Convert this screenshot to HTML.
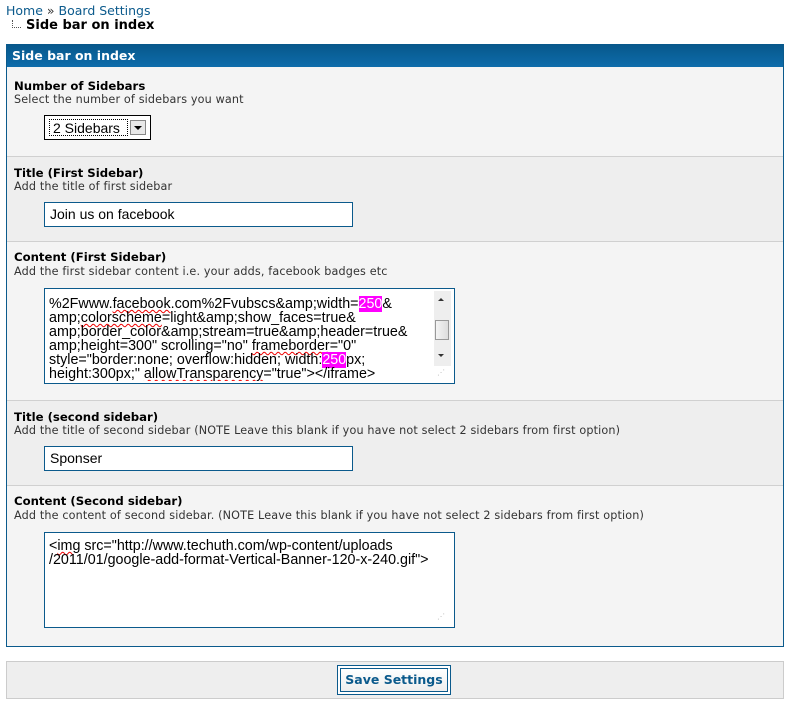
<!DOCTYPE html>
<html><head><meta charset="utf-8"><style>
*{margin:0;padding:0;box-sizing:border-box}
body{width:786px;height:701px;background:#fff;font-family:"DejaVu Sans",Verdana,sans-serif;position:relative;overflow:hidden}
.a{position:absolute}
.crumb{font-size:12.5px;color:#0b5a8c;left:6px;top:3px;white-space:nowrap}
.cur{font-size:13px;font-weight:bold;color:#000;left:26px;top:18px}
.panel{left:6px;top:44px;width:778px;height:603px;border:1px solid #0b5a8c;border-top:none;background:#f4f4f4}
.hd{left:0;top:0;width:776px;height:23px;background:linear-gradient(#07578a,#0e6cab);color:#fff;font-weight:bold;font-size:12.5px;padding:4px 0 0 5px}
.row{left:0;width:776px;border-bottom:1px solid #d0d0d0}
.lb{font-size:11.7px;font-weight:bold;color:#000;left:7px;white-space:nowrap}
.ds{font-size:11.2px;color:#333;left:7px;white-space:nowrap;letter-spacing:0.15px}
.inp{border:1px solid #0b5a8c;background:#fff;font-family:"Liberation Sans",Arial,sans-serif;font-size:14px;padding:3px 0 0 5px;color:#000}
.ta{font-family:"Liberation Sans",Arial,sans-serif;font-size:14.3px;line-height:14px;padding:2px 0 0 4px;color:#000;overflow:hidden;white-space:nowrap}
.hl{background:#ff00ff;color:#fff}
.sq{text-decoration:underline wavy #e00;text-decoration-thickness:1px}
</style></head><body>
<div class="a crumb">Home <span style="color:#333">»</span> Board Settings</div>
<div class="a" style="left:12px;top:20px;width:9px;height:8px;border-left:1px dotted #555;border-bottom:1px dotted #555"></div>
<div class="a cur">Side bar on index</div>

<div class="a panel">
<div class="a hd">Side bar on index</div>
<div class="a row" style="top:23px;height:90px;background:#f4f4f4">
 <div class="a lb" style="top:12px">Number of Sidebars</div>
 <div class="a ds" style="top:26px">Select the number of sidebars you want</div>
 <div class="a" style="left:37px;top:48px;width:107px;height:25px;border:1px solid #000;background:#fff">
  <div class="a" style="left:4px;top:3px;width:79px;height:17px;border:1px dotted #000;font-family:'Liberation Sans',Arial,sans-serif;font-size:14px;padding:0 0 0 3px">2 Sidebars</div>
  <div class="a" style="left:85px;top:4px;width:16px;height:15px;border:1px solid #888;background:#e8e8e8"><div class="a" style="left:3px;top:5px;border-left:4px solid transparent;border-right:4px solid transparent;border-top:4px solid #000"></div></div>
 </div>
</div>
<div class="a row" style="top:113px;height:85px;background:#eeeeee">
 <div class="a lb" style="top:9px">Title (First Sidebar)</div>
 <div class="a ds" style="top:23px">Add the title of first sidebar</div>
 <div class="a inp" style="left:37px;top:45px;width:309px;height:25px">Join us on facebook</div>
</div>
<div class="a row" style="top:198px;height:159px;background:#f4f4f4">
 <div class="a lb" style="top:8px">Content (First Sidebar)</div>
 <div class="a ds" style="top:23px">Add the first sidebar content i.e. your adds, facebook badges etc</div>
 <div class="a" style="left:37px;top:46px;width:411px;height:96px;border:1px solid #0b5a8c;background:#fff;overflow:hidden">
  <div class="a ta" style="left:0;top:-8px;width:385px">
  <span style="color:#fff">x</span><br>
  %2Fwww.<span class="sq">facebook</span>.com%2Fvubscs&amp;amp;width=<span class="hl">250</span>&amp;<br>
  amp;<span class="sq">colorscheme</span>=light&amp;amp;show_faces=true&amp;<br>
  amp;border_color&amp;amp;stream=true&amp;amp;header=true&amp;<br>
  amp;height=300" scrolling="no" <span class="sq">frameborder</span>="0"<br>
  style="border:none; overflow:hidden; width:<span class="hl">250</span>px;<br>
  height:300px;" <span class="sq">allowTransparency</span>="true"&gt;&lt;/iframe&gt;</div>
  <div class="a" style="left:389px;top:2px;width:17px;height:75px;background:#eee"></div>
  <div class="a" style="left:393px;top:9px;border-left:3px solid transparent;border-right:3px solid transparent;border-bottom:3px solid #333"></div>
  <div class="a" style="left:390px;top:31px;width:14px;height:20px;border:1px solid #999;background:linear-gradient(90deg,#f4f4f4,#ddd)"></div>
  <div class="a" style="left:393px;top:65px;border-left:3px solid transparent;border-right:3px solid transparent;border-top:3px solid #333"></div>
  <div class="a" style="left:392px;top:79px;color:#bbb;font-size:8px">⋰</div>
 </div>
</div>
<div class="a row" style="top:357px;height:85px;background:#eeeeee">
 <div class="a lb" style="top:9px">Title (second sidebar)</div>
 <div class="a ds" style="top:23px">Add the title of second sidebar (NOTE Leave this blank if you have not select 2 sidebars from first option)</div>
 <div class="a inp" style="left:37px;top:45px;width:309px;height:25px">Sponser</div>
</div>
<div class="a row" style="top:442px;height:160px;background:#f4f4f4;border-bottom:none">
 <div class="a lb" style="top:8px">Content (Second sidebar)</div>
 <div class="a ds" style="top:23px">Add the content of second sidebar. (NOTE Leave this blank if you have not select 2 sidebars from first option)</div>
 <div class="a" style="left:37px;top:46px;width:411px;height:96px;border:1px solid #0b5a8c;background:#fff">
  <div class="a ta" style="left:0;top:4px">&lt;<span class="sq">img</span> src="http://www.techuth.com/wp-content/uploads<br>/2011/01/google-add-format-Vertical-Banner-120-x-240.gif"&gt;</div>
  <div class="a" style="left:392px;top:79px;color:#bbb;font-size:8px">⋰</div>
 </div>
</div>
</div>

<div class="a" style="left:6px;top:661px;width:778px;height:38px;background:#eee;border:1px solid #ccc"></div>
<div class="a" style="left:337px;top:665px;width:114px;height:30px;border:1px solid #0b5a8c;padding:2px;background:#fff">
 <div style="width:100%;height:100%;border:1px solid #0b5a8c;background:linear-gradient(#fff,#eee);color:#0b5a8c;font-family:'DejaVu Sans',Verdana,sans-serif;font-weight:bold;font-size:12.5px;text-align:center;line-height:22px;white-space:nowrap">Save Settings</div>
</div>
</body></html>
